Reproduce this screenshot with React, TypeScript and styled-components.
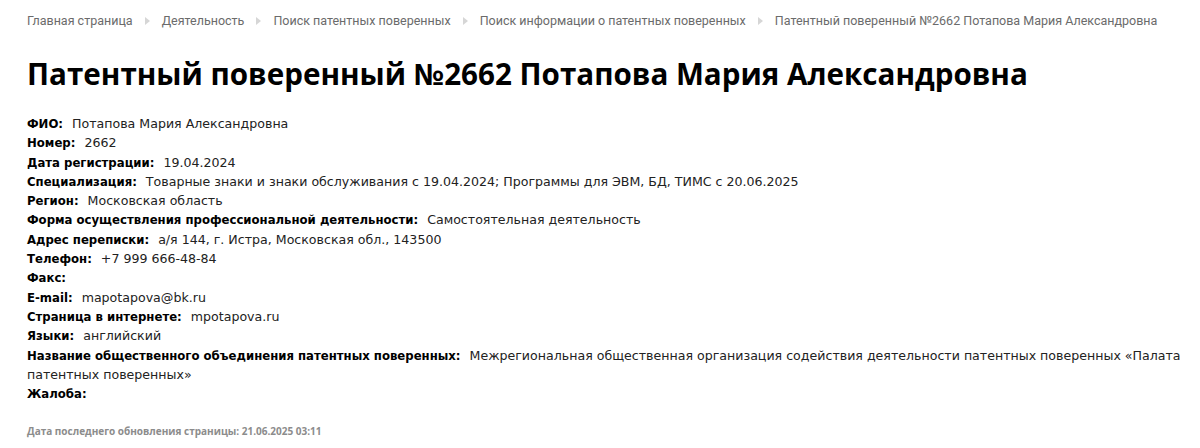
import React from "react";
import styled, { createGlobalStyle } from "styled-components";

const Global = createGlobalStyle`
  html, body { margin: 0; padding: 0; background: #fff; }
  body { font-family: "DejaVu Sans", Verdana, sans-serif; color: #1a1a1a; }
`;

const Page = styled.div`
  padding: 12px 8px 0 27px;
`;

const Crumbs = styled.nav`
  display: flex;
  align-items: center;
  white-space: nowrap;
  font-family: Roboto, "Open Sans", sans-serif;
  font-size: 12.5px;
  line-height: 18px;
  color: #6b6b6b;
`;

const Crumb = styled.a`
  color: inherit;
  text-decoration: none;
`;

const Sep = styled.span`
  display: inline-block;
  width: 0;
  height: 0;
  margin: 0 12px 0 12px;
  border-top: 4px solid transparent;
  border-bottom: 4px solid transparent;
  border-left: 5px solid #d6d6d6;
`;

const Title = styled.h1`
  margin: 26px 0 22px;
  font-family: "Open Sans", sans-serif;
  font-weight: 700;
  font-size: 29.6px;
  line-height: 36px;
  color: #000;
`;

const Fields = styled.div`
  font-size: 12.6px;
  line-height: 19.3px;
`;

const Row = styled.div``;

const Label = styled.b`
  font-family: "DejaVu Sans Condensed", "DejaVu Sans", sans-serif;
  font-size: 13px;
  line-height: 19.3px;
  font-weight: 700;
  color: #000;
  margin-right: 9px;
`;

const Value = styled.span`
  color: #222;
`;

const Updated = styled.div`
  margin-top: 21px;
  font-family: "Open Sans", sans-serif;
  font-weight: 700;
  font-size: 10px;
  line-height: 14px;
  color: #8c8c8c;
`;

const crumbs = [
  "Главная страница",
  "Деятельность",
  "Поиск патентных поверенных",
  "Поиск информации о патентных поверенных",
  "Патентный поверенный №2662 Потапова Мария Александровна",
];

const fields: [string, string][] = [
  ["ФИО:", "Потапова Мария Александровна"],
  ["Номер:", "2662"],
  ["Дата регистрации:", "19.04.2024"],
  ["Специализация:", "Товарные знаки и знаки обслуживания с 19.04.2024; Программы для ЭВМ, БД, ТИМС с 20.06.2025"],
  ["Регион:", "Московская область"],
  ["Форма осуществления профессиональной деятельности:", "Самостоятельная деятельность"],
  ["Адрес переписки:", "а/я 144, г. Истра, Московская обл., 143500"],
  ["Телефон:", "+7 999 666-48-84"],
  ["Факс:", ""],
  ["E-mail:", "mapotapova@bk.ru"],
  ["Страница в интернете:", "mpotapova.ru"],
  ["Языки:", "английский"],
  [
    "Название общественного объединения патентных поверенных:",
    "Межрегиональная общественная организация содействия деятельности патентных поверенных «Палата патентных поверенных»",
  ],
  ["Жалоба:", ""],
];

export default function App() {
  return (
    <>
      <Global />
      <Page>
        <Crumbs>
          {crumbs.map((c, i) => (
            <React.Fragment key={c}>
              {i > 0 && <Sep />}
              <Crumb href="#">{c}</Crumb>
            </React.Fragment>
          ))}
        </Crumbs>
        <Title>Патентный поверенный №2662 Потапова Мария Александровна</Title>
        <Fields>
          {fields.map(([l, v]) => (
            <Row key={l}>
              <Label>{l}</Label>
              <Value>{v}</Value>
            </Row>
          ))}
        </Fields>
        <Updated>Дата последнего обновления страницы: 21.06.2025 03:11</Updated>
      </Page>
    </>
  );
}
